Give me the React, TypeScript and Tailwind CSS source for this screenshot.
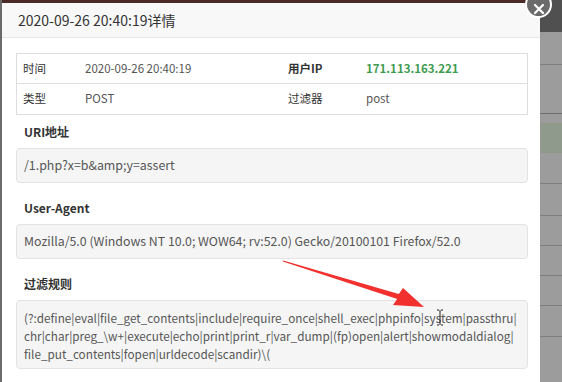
import React from "react";

const font = { fontFamily: '"Noto Sans CJK SC", "Noto Sans", sans-serif' };

function Section({ label, children, first }: { label: string; children: React.ReactNode; first?: boolean }) {
  return (
    <div className={first ? "mt-[9px]" : "mt-[17px]"}>
      <div className="text-[12px] font-bold leading-4 text-[#333] pl-[8px] mb-[8px]">{label}</div>
      {children}
    </div>
  );
}

export default function App() {
  return (
    <div className="relative w-[562px] h-[382px] overflow-hidden bg-[#9c9c9c]" style={font}>
      <div className="flex h-full">
        <div className="w-[540px] shrink-0 h-full bg-white border-l-2 border-[#6a6a6a] flex flex-col overflow-hidden">
          <div className="h-[3px] shrink-0 bg-[#4a2a28]" />
          <div className="h-[35px] shrink-0 bg-[#f8f8f8] border-b border-[#e8e8e8] flex items-center pl-[16px] text-[14px] text-[#333]">
            2020-09-26 20:40:19详情
          </div>
          <div className="shrink-0 pl-[14px] pr-[12px] pt-[15px]">
            <div className="border border-[#dddddd] text-[11.5px] text-[#555]">
              <div className="grid grid-cols-[68px_197px_78px_1fr] h-[30px] items-center border-b border-[#dddddd]">
                <div className="pl-[6px] text-[#333]">时间</div>
                <div>2020-09-26 20:40:19</div>
                <div className="pl-[6px] text-[#333] font-bold">用户IP</div>
                <div className="pl-[6px] text-[#3f9b4f] font-bold">171.113.163.221</div>
              </div>
              <div className="grid grid-cols-[68px_197px_78px_1fr] h-[30px] items-center">
                <div className="pl-[6px] text-[#333]">类型</div>
                <div>POST</div>
                <div className="pl-[6px] text-[#333]">过滤器</div>
                <div className="pl-[6px]">post</div>
              </div>
            </div>

            <Section label="URI地址" first>
              <div className="bg-[#f5f5f5] border border-[#e3e3e3] rounded-[4px] px-[7px] py-[8px] text-[12.4px] leading-[17px] text-[#555]">
                /1.php?x=b&amp;amp;y=assert
              </div>
            </Section>

            <Section label="User-Agent">
              <div className="bg-[#f5f5f5] border border-[#e3e3e3] rounded-[4px] px-[7px] py-[8px] text-[12.35px] leading-[17px] text-[#555]">
                Mozilla/5.0 (Windows NT 10.0; WOW64; rv:52.0) Gecko/20100101 Firefox/52.0
              </div>
            </Section>

            <Section label="过滤规则">
              <div className="bg-[#f5f5f5] border border-[#e3e3e3] rounded-[4px] px-[7px] pt-[8px] pb-[5px] text-[11.75px] leading-[18px] text-[#555] whitespace-nowrap">
                (?:define|eval|file_get_contents|include|require_once|shell_exec|phpinfo|system|passthru|
                <br />
                chr|char|preg_\w+|execute|echo|print|print_r|var_dump|(fp)open|alert|showmodaldialog|
                <br />
                file_put_contents|fopen|urldecode|scandir)\(
              </div>
            </Section>
          </div>
        </div>
        <div className="flex-1 h-full flex flex-col">
          <div className="h-[32px] shrink-0 bg-[#505050]" />
          <div className="h-[32px] shrink-0" />
          <div className="h-[49px] shrink-0 border-t border-[#7e7e7e]" />
          <div className="h-[10px] shrink-0 border-t border-[#6e6e6e]" />
          <div className="h-[30px] shrink-0 bg-[#8f9a8c]" />
          <div className="h-[30px] shrink-0" />
          <div className="h-[32px] shrink-0 border-t border-[#7e7e7e]" />
          <div className="h-[30px] shrink-0 border-t border-[#7e7e7e]" />
          <div className="h-[30px] shrink-0 border-t border-[#7e7e7e]" />
          <div className="h-[30px] shrink-0 border-t border-[#7e7e7e]" />
          <div className="h-[31px] shrink-0 border-t border-[#7e7e7e]" />
          <div className="flex-1 border-t border-[#7e7e7e]" />
        </div>
      </div>

      {/* close button */}
      <div className="absolute left-[525px] top-[-9px] w-[27px] h-[27px] rounded-full bg-[#6b6b6b] border-2 border-white flex items-center justify-center">
        <svg width="12" height="12" viewBox="0 0 12 12" className="mt-[8px]">
          <path d="M2 2 L10 10 M10 2 L2 10" stroke="white" strokeWidth="2.2" strokeLinecap="round" />
        </svg>
      </div>

      {/* red arrow annotation */}
      <svg className="absolute left-0 top-0 pointer-events-none" width="562" height="382" viewBox="0 0 562 382">
        <polygon
          points="283.2,260.5 398.8,294.1 403,288 424,307 393,305 397.2,298.9 282.8,261.5"
          fill="#f2302e"
        />
        <path d="M437 310 h2 M443 310 h-2 M440 310 v15 M437 325 h2 M443 325 h-2" stroke="#222" strokeWidth="1" fill="none" />
      </svg>
    </div>
  );
}
